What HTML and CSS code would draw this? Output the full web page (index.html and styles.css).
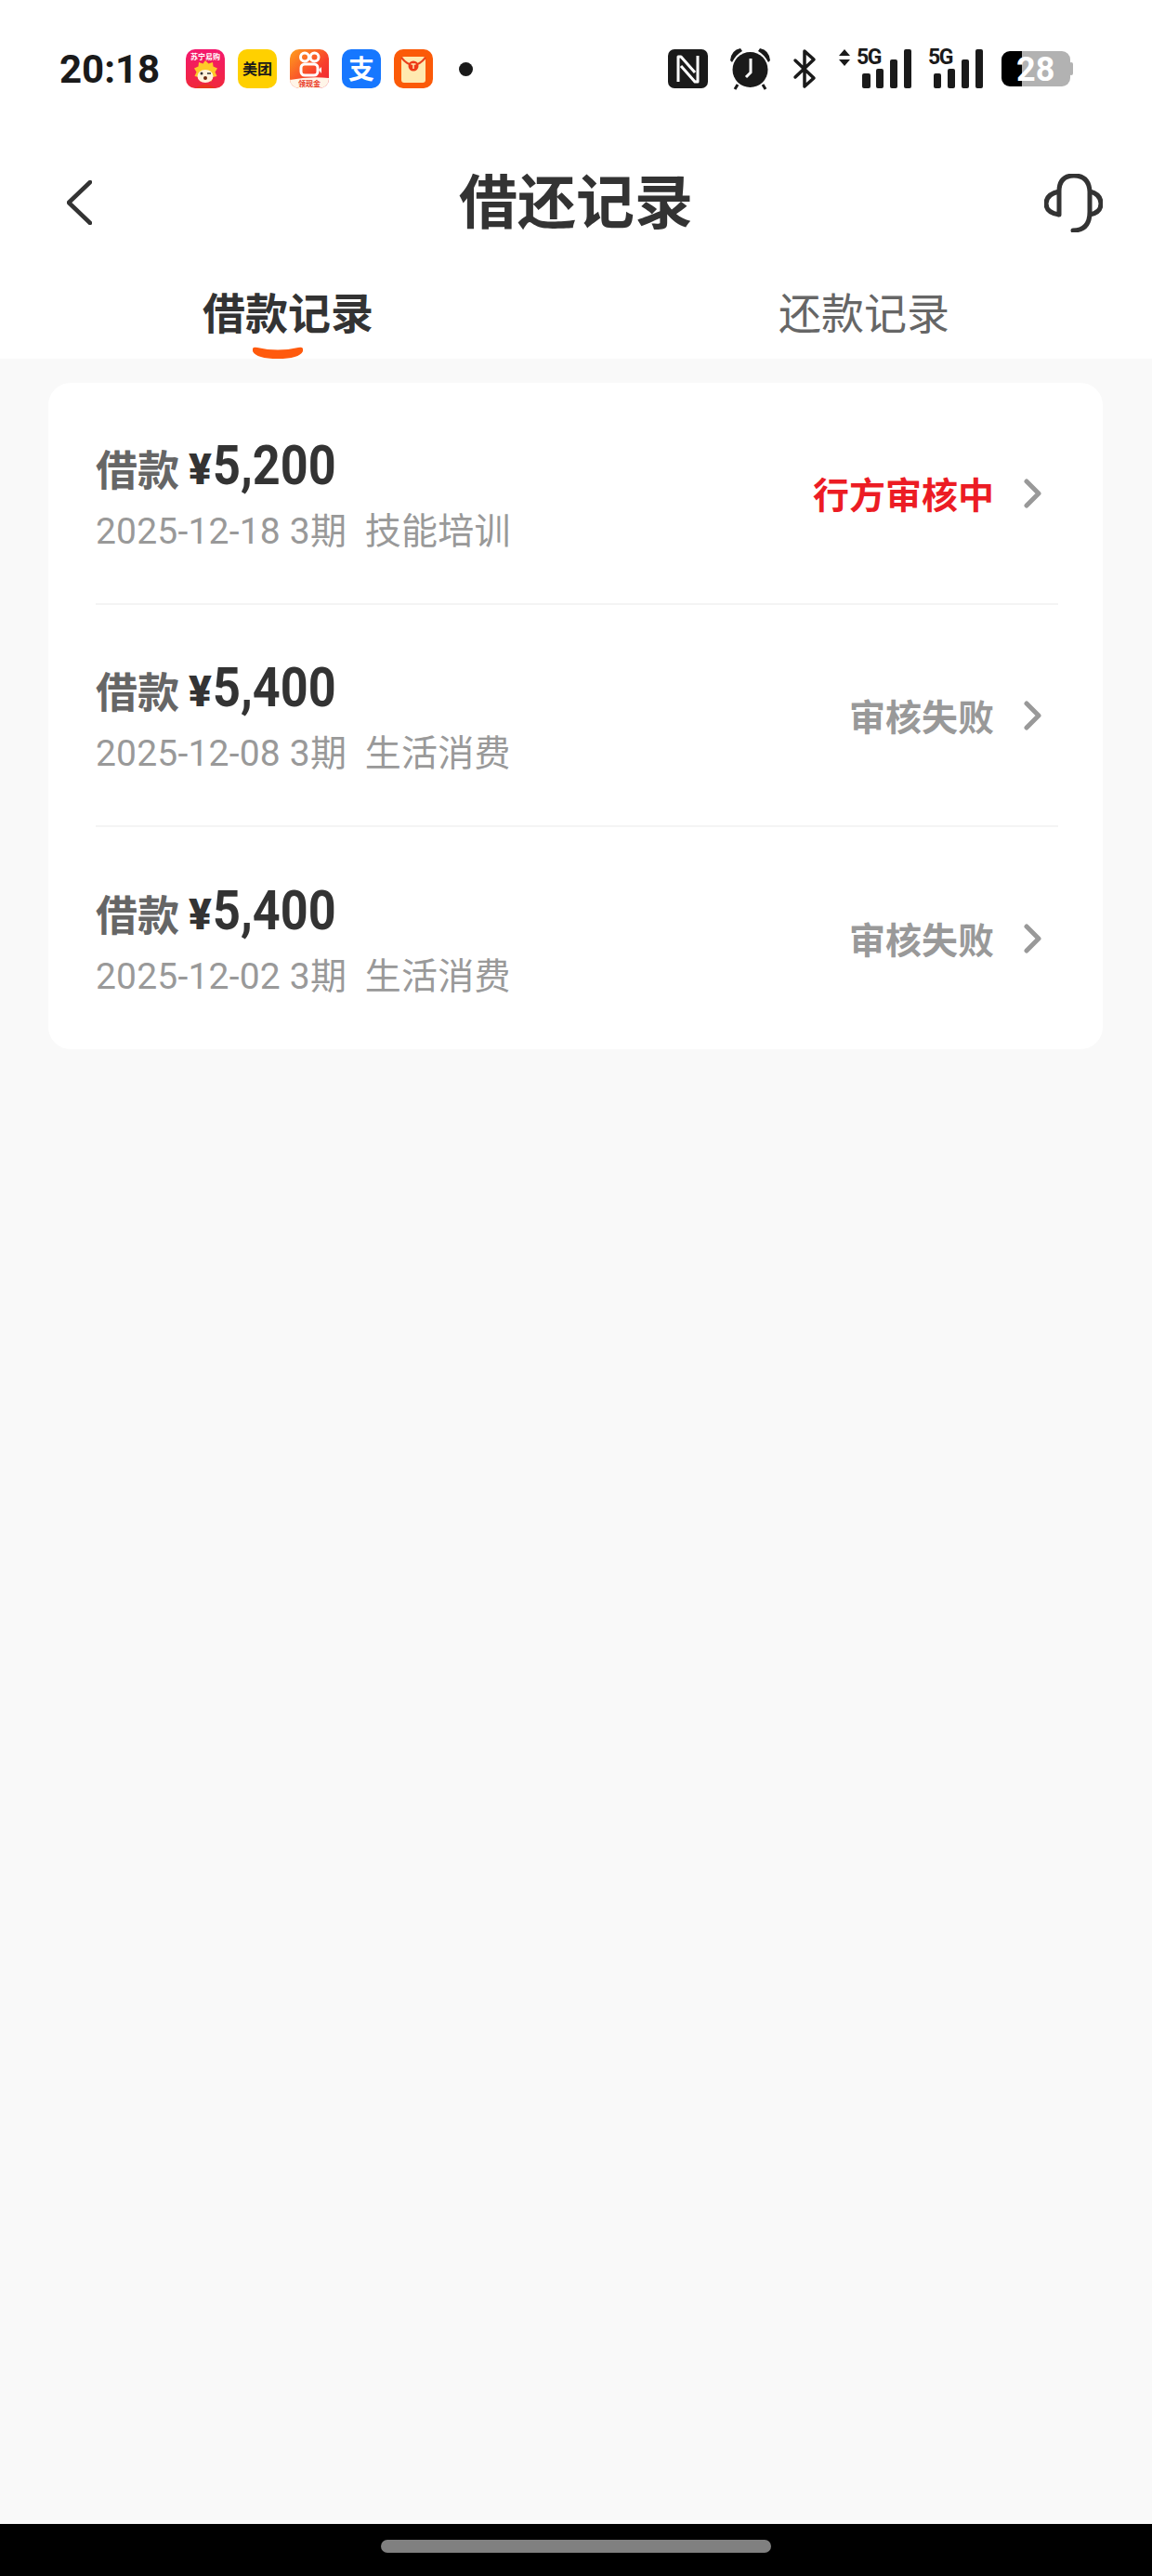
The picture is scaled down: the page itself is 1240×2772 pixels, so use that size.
FILE: index.html
```html
<!DOCTYPE html>
<html lang="zh-CN">
<head>
<meta charset="utf-8">
<title>借还记录</title>
<link rel="stylesheet" href="styles.css">
</head>
<body>
<div class="screen">
  <div class="top">
    <div class="statusbar">
      <span class="time">20:18</span>
      <div class="apps">
        <svg class="app" viewBox="0 0 42 42"><defs><linearGradient id="sn" x1="0" y1="0" x2="0" y2="1"><stop offset="0" stop-color="#f5186e"/><stop offset="1" stop-color="#f0283c"/></linearGradient></defs><rect width="42" height="42" rx="10" fill="url(#sn)"/><text x="21" y="11" class="t-sn">苏宁易购</text><path d="M21 12l3.500 3.500 4.500-1.500 .5 4.500 4.500 2-2.500 4 2 4.500-4.500 1-1.500 4.500-6-1.500-6 1.500-1.500-4.500-4.500-1 2-4.500-2.500-4 4.500-2 .5-4.500 4.500 1.500z" fill="#ffc928"/><ellipse cx="21" cy="29" rx="8.500" ry="7" fill="#fff3dc"/><circle cx="17" cy="26" r="1.500" fill="#333"/><path d="M23 26h4" stroke="#333" stroke-width="1.500"/><circle cx="21" cy="31" r="2" fill="#6b2a10"/><path d="M11 42q10-9 20 0z" fill="#e8341c"/></svg>
        <svg class="app" viewBox="0 0 42 42"><rect width="42" height="42" rx="10" fill="#ffd000"/><text x="21" y="27" class="t-mt">美团</text></svg>
        <svg class="app" viewBox="0 0 42 42"><defs><linearGradient id="ks" x1="0" y1="0" x2="1" y2="1"><stop offset="0" stop-color="#ffa01e"/><stop offset=".6" stop-color="#f8402c"/><stop offset="1" stop-color="#ee2036"/></linearGradient></defs><rect width="42" height="42" rx="10" fill="url(#ks)"/><circle cx="16" cy="8.500" r="4.500" fill="none" stroke="#fff" stroke-width="3"/><circle cx="26.500" cy="8.500" r="4.500" fill="none" stroke="#fff" stroke-width="3"/><rect x="12" y="16" width="18" height="12" rx="4" fill="none" stroke="#fff" stroke-width="3"/><path d="M31 22l3-3v7z" fill="#fff"/><path d="M0 33q21-4 42-2v1a10 10 0 0 1-10 10H10A10 10 0 0 1 0 32z" fill="#fff5e8"/><text x="21" y="40" class="t-ks">领现金</text></svg>
        <svg class="app" viewBox="0 0 42 42"><rect width="42" height="42" rx="10" fill="#1677ff"/><text x="21" y="31.500" class="t-ali">支</text></svg>
        <svg class="app" viewBox="0 0 42 42"><rect width="42" height="42" rx="10" fill="#fb5a08"/><rect x="8" y="8" width="26" height="28" rx="3" fill="#ffe9b0"/><path d="M8 9q13 16 26 0" fill="none" stroke="#e8401c" stroke-width="2"/><circle cx="21" cy="18" r="5.500" fill="#ee3a18"/><path d="M18.500 16h5M21 16v5" stroke="#ffe9b0" stroke-width="1.500"/></svg>
      </div>
      <span class="dot"></span>
      <div class="sysicons">
        <svg class="nfc" viewBox="0 0 43 42"><rect width="43" height="42" rx="7" fill="#1a1a1a"/><path d="M11 35V8h3l15 17M32 7v28h-3L14 18" fill="none" stroke="#fff" stroke-width="3" stroke-linejoin="round"/></svg>
        <svg class="alarm" viewBox="0 0 45 44"><path d="M1 13Q2 2 12 0l2 3Q7 7 3 15z" fill="#1a1a1a"/><path d="M44 13Q43 2 33 0l-2 3q7 4 11 12z" fill="#1a1a1a"/><circle cx="22.500" cy="23" r="19" fill="#1a1a1a"/><path d="M9 39l-3 5M36 39l3 5" stroke="#1a1a1a" stroke-width="3"/><path d="M23 11v15l-5 5" fill="none" stroke="#fff" stroke-width="3"/></svg>
        <svg class="bt" viewBox="0 0 24 42"><path d="M2 12l20 19-10 9V2l10 9L2 30" fill="none" stroke="#1a1a1a" stroke-width="3.500" stroke-linejoin="round" stroke-linecap="round"/></svg>
        <svg class="net1" viewBox="0 0 78 42"><path d="M0 7l6-7 6 7zM0 11h12l-6 7z" fill="#1a1a1a"/><text x="19" y="16" class="t-5g">5G</text><rect x="25" y="26" width="9" height="16" rx="2" fill="#1a1a1a"/><rect x="40" y="21" width="8" height="21" rx="2" fill="#1a1a1a"/><rect x="55" y="11" width="8" height="31" rx="2" fill="#1a1a1a"/><rect x="70" y="0" width="8" height="42" rx="2" fill="#1a1a1a"/></svg>
        <svg class="net2" viewBox="0 0 59 42"><text x="0" y="16" class="t-5g">5G</text><rect x="6" y="26" width="8" height="16" rx="2" fill="#1a1a1a"/><rect x="21" y="21" width="8" height="21" rx="2" fill="#1a1a1a"/><rect x="36" y="11" width="8" height="31" rx="2" fill="#1a1a1a"/><rect x="51" y="0" width="8" height="42" rx="2" fill="#1a1a1a"/></svg>
        <svg class="battery" viewBox="0 0 77 38"><path d="M9 0H22V38H9A9 9 0 0 1 0 29V9A9 9 0 0 1 9 0z" fill="#000"/><path d="M22 0H65A9 9 0 0 1 74 9V29A9 9 0 0 1 65 38H22z" fill="#b2b2b2"/><rect x="73" y="12" width="4" height="14" rx="2" fill="#b2b2b2"/><text x="16" y="32" class="t-batt">28</text></svg>
      </div>
    </div>
    <header class="nav">
      <svg class="back" viewBox="0 0 27 48"><path d="M25 2L2 24l23 22" fill="none" stroke="#333" stroke-width="4.500" stroke-linecap="round" stroke-linejoin="round"/></svg>
      <h1 class="title">借还记录</h1>
      <svg class="headset" viewBox="0 0 63 63"><path d="M16 44V19Q16 2 32 2T49 19V41Q49 61 31 61" fill="none" stroke="#333" stroke-width="5" stroke-linecap="round"/><path d="M16 19Q2 22 2 32T16 44M49 19Q61 22 61 32T49 44" fill="none" stroke="#333" stroke-width="5"/></svg>
    </header>
    <nav class="tabs">
      <div class="tab tab-active">借款记录
        <svg class="tab-mark" viewBox="0 0 54 14"><path d="M0 3Q1 1 5 2Q27 7 49 2Q53 1 54 3V6Q50 14 27 14Q4 14 0 6z" fill="#ff5a0d"/></svg>
      </div>
      <div class="tab">还款记录</div>
    </nav>
  </div>

  <main class="content">
    <section class="card">
      <div class="row">
        <div class="info">
          <div class="amount-line"><span class="label">借款</span><span class="yen">¥</span><span class="money">5,200</span></div>
          <div class="meta">2025-12-18 3期&nbsp;&nbsp;技能培训</div>
        </div>
        <div class="state state-red">行方审核中</div>
        <svg class="chev" viewBox="0 0 19 32"><path d="M3 3l13 13L3 29" fill="none" stroke="#999" stroke-width="5" stroke-linecap="round" stroke-linejoin="round"/></svg>
      </div>
      <div class="row">
        <div class="info">
          <div class="amount-line"><span class="label">借款</span><span class="yen">¥</span><span class="money">5,400</span></div>
          <div class="meta">2025-12-08 3期&nbsp;&nbsp;生活消费</div>
        </div>
        <div class="state">审核失败</div>
        <svg class="chev" viewBox="0 0 19 32"><path d="M3 3l13 13L3 29" fill="none" stroke="#999" stroke-width="5" stroke-linecap="round" stroke-linejoin="round"/></svg>
      </div>
      <div class="row">
        <div class="info">
          <div class="amount-line"><span class="label">借款</span><span class="yen">¥</span><span class="money">5,400</span></div>
          <div class="meta">2025-12-02 3期&nbsp;&nbsp;生活消费</div>
        </div>
        <div class="state">审核失败</div>
        <svg class="chev" viewBox="0 0 19 32"><path d="M3 3l13 13L3 29" fill="none" stroke="#999" stroke-width="5" stroke-linecap="round" stroke-linejoin="round"/></svg>
      </div>
    </section>
  </main>

  <div class="homebar"><span class="home-pill"></span></div>
</div>
</body>
</html>
```
FILE: styles.css
```css
* { box-sizing: border-box; }
html, body { margin: 0; padding: 0; }
body {
  background: #f9f9f9;
  font-family: Roboto, "Noto Sans CJK SC", sans-serif;
  color: #333;
}
.screen {
  width: 1240px;
  height: 2772px;
  display: flex;
  flex-direction: column;
  overflow: hidden;
}
.top { background: #fff; }

/* status bar */
.statusbar {
  height: 148px;
  display: flex;
  align-items: center;
  padding: 0 85px 0 64px;
}
.time {
  font-size: 42px;
  font-weight: 700;
  color: #1a1a1a;
  width: 136px;
}
.apps { display: flex; gap: 14px; }
.app { width: 42px; height: 42px; display: block; overflow: visible; }
.dot {
  width: 15px;
  height: 15px;
  border-radius: 50%;
  background: #1a1a1a;
  margin-left: 28px;
}
.sysicons {
  margin-left: auto;
  display: flex;
  align-items: center;
}
.sysicons svg { display: block; flex: none; overflow: visible; }
.nfc { width: 43px; height: 42px; }
.alarm { width: 45px; height: 44px; margin-left: 23px; }
.bt { width: 24px; height: 42px; margin-left: 24px; }
.net1 { width: 78px; height: 42px; margin-left: 25px; }
.net2 { width: 59px; height: 42px; margin-left: 18px; }
.battery { width: 77px; height: 38px; margin-left: 20px; }

.t-sn { font: 700 8px "Noto Sans CJK SC", sans-serif; fill: #fff; text-anchor: middle; }
.t-mt { font: 700 16px "Noto Sans CJK SC", sans-serif; fill: #1a1a1a; text-anchor: middle; }
.t-ks { font: 700 8px "Noto Sans CJK SC", sans-serif; fill: #e8341c; text-anchor: middle; }
.t-ali { font: 700 28px "Noto Sans CJK SC", sans-serif; fill: #fff; text-anchor: middle; }
.t-5g { font: 700 23px Roboto, sans-serif; fill: #1a1a1a; letter-spacing: -1.500px; }
.t-batt { font: 700 36px Roboto, sans-serif; fill: #fff; }

/* nav */
.nav {
  height: 140px;
  display: grid;
  grid-template-columns: 1fr auto 1fr;
  align-items: center;
  padding: 0 53px;
}
.back { width: 27px; height: 48px; display: block; margin-left: 19px; }
.headset { width: 63px; height: 63px; display: block; justify-self: end; }
.title {
  margin: 0;
  font-size: 63px;
  font-weight: 700;
  line-height: 1;
  color: #333;
}

/* tabs */
.tabs { display: flex; height: 98px; }
.tab {
  position: relative;
  flex: 1;
  text-align: center;
  font-size: 46px;
  line-height: 100px;
  color: #666;
}
.tab-active { font-weight: 700; color: #333; }
.tab-mark {
  position: absolute;
  left: 272px;
  bottom: 0;
  width: 54px;
  height: 14px;
}

/* list */
.content { flex: 1; padding: 26px 53px 0 52px; }
.card {
  background: #fff;
  border-radius: 24px;
  padding: 0 48px 0 51px;
}
.row {
  height: 239px;
  display: flex;
  align-items: center;
  border-bottom: 2px solid #f4f4f4;
}
.row:last-child { border-bottom: 0; }
.info { flex: 1; min-width: 0; }
.amount-line {
  display: flex;
  align-items: baseline;
  height: 68px;
  color: #333;
}
.label { font-size: 45px; font-weight: 700; color: #666; line-height: 68px; transform: translateY(2px); }
.yen { font-size: 46px; font-weight: 900; margin-left: 10px; }
.money {
  font-size: 60px;
  font-weight: 700;
  margin-left: 1px;
  display: inline-block;
  transform: scaleX(.87);
  transform-origin: left center;
}
.meta {
  margin-top: 14px;
  font-size: 39px;
  letter-spacing: .2px;
  line-height: 50px;
  color: #999;
}
.state {
  margin-bottom: 2px;
  font-size: 39px;
  font-weight: 700;
  color: #999;
}
.state-red { color: #ec1c24; }
.chev { width: 19px; height: 32px; margin: 0 18px 0 32px; display: block; flex: none; }

/* home bar */
.homebar {
  height: 56px;
  background: #000;
  display: flex;
  justify-content: center;
  padding-top: 17px;
}
.home-pill {
  width: 420px;
  height: 14px;
  border-radius: 7px;
  background: #808080;
}
```
